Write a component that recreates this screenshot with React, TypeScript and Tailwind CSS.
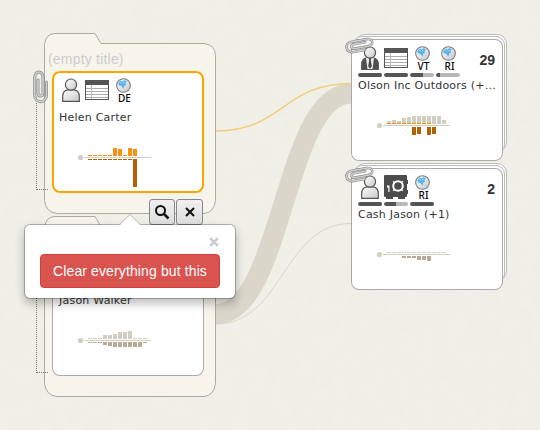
import React from "react";

type Chart = { up: number[]; down: number[]; hot?: number; accent?: boolean; accentDown?: boolean };

const columns = (values: number[], up: boolean, fill: string) =>
  values.map((h, i) =>
    h ? <rect key={i} x={8 + i * 5} y={up ? 10 - h : 13} width={4} height={h} fill={fill} /> : null
  );

function Timeline({ up, down, hot = 0, accent, accentDown }: Chart) {
  return (
    <svg className="ml-[28px] block h-[44px] w-[72px] overflow-visible" viewBox="0 0 72 44" shapeRendering="crispEdges">
      <circle cx="0.5" cy="11.5" r="2.6" fill="#d2cec2" shapeRendering="auto" />
      <rect x="4" y="11" width="67" height="1" fill="#d2cec2" />
      {columns(up, true, accent ? "#f9900f" : "#d2cec2")}
      {Array.from({ length: hot }, (_, i) => (
        <rect key={i} x={8 + i * 5} y={9} width={4} height={1} fill="#f9900f" />
      ))}
      {columns(down, false, accentDown ? "#b26200" : "#b5ab96")}
    </svg>
  );
}

function Person({ tie }: { tie?: boolean }) {
  return (
    <svg className="block h-[24px] w-[24px]" viewBox="0 0 24 24">
      <path
        d="M3.7 23.3V18.5C3.7 14.5 5.7 12.2 9 11.8H15C18.3 12.2 20.3 14.5 20.3 18.5V23.3Z"
        fill={tie ? "#4f4f4f" : "url(#steel)"}
        stroke="#555"
        strokeWidth="1.2"
      />
      {tie && <path d="M8 12L9.500 23H14.500L16 12Z" fill="#eee" />}
      {tie && <path d="M10.6 12h2.8l-.6 2.200 1 6-1.800 2.500-1.800-2.500 1-6Z" fill="#444" />}
      <circle cx="12" cy="6.6" r="5.6" fill="url(#steel)" stroke="#555" strokeWidth="1.2" />
    </svg>
  );
}

function Table() {
  return (
    <svg className="block h-[24px] w-[24px]" viewBox="0 0 24 24" shapeRendering="crispEdges">
      <rect x="0.5" y="2.5" width="23" height="19" fill="#fff" stroke="#555" />
      <rect x="0" y="2" width="24" height="5" fill="#555" />
      <path d="M1 10.5H23M1 13.5H23M1 16.5H23M1 19.5H23" stroke="#aaa" />
      <path d="M6.5 7V21" stroke="#bbb" />
    </svg>
  );
}

function Safe() {
  return (
    <svg className="block h-[24px] w-[24px]" viewBox="0 0 24 24">
      <path d="M1 0H22Q23 0 23 1V5H24V9H23V15H24V19H23V21Q23 22 22 22H21V24H14V22H9V24H2V22H1Q0 22 0 21V1Q0 0 1 0Z" fill="#4c4c4c" />
      <path d="M9.200 6.200L18.800 15.800M18.800 6.200L9.200 15.800" stroke="#fff" strokeWidth="1.400" />
      <circle cx="14" cy="11" r="4.800" fill="#4c4c4c" stroke="#fff" strokeWidth="2" />
      <path d="M3 10.5h2.500V17H4.300v-4.500H3Z" fill="#fff" />
    </svg>
  );
}

function Globe({ code }: { code: string }) {
  return (
    <div className="flex h-[24px] w-[24px] flex-col items-center">
      <svg className="block h-[15px] w-[15px] shrink-0" viewBox="0 0 16 16">
        <circle cx="8" cy="8" r="7.3" fill="url(#steel)" stroke="#777" strokeWidth="1.1" />
        <path d="M2.4 5.2L5 2.7 7.3 3.6 8.8 2.2 11.7 3.5 10.2 5.3 10.6 7.4 9 8 7.8 11.5 5.8 8.6 3 7.8Z" fill="#57b3ee" />
        <path d="M11 9l2.2 1-1 2.5-1.6-1Z" fill="#c7d5dc" />
        <path d="M4.5 4.5l1.6.6M7.5 5.4l1.6-1.1" stroke="#cbe8fa" strokeWidth=".8" />
      </svg>
      <span className="ml-[3px] mt-[-1px] font-['Noto_Sans',sans-serif] text-[10px] leading-[12px] font-medium text-black">{code}</span>
    </div>
  );
}

type Item = { icon: React.ReactNode; level?: number };
type CardData = { name: string; items: Item[]; count?: number; chart: Chart };

function CardBody({ name, items, count, chart }: CardData) {
  return (
    <div className="flex h-full w-full flex-col">
      <div className="flex h-[39px] gap-[2px] pl-[7px] pr-[8px] pt-[7px]">
        {items.map((item, i) => (
          <div key={i} className="flex w-[24px] flex-col gap-[3px]">
            {item.icon}
            {item.level !== undefined && (
              <div className="h-[4px] w-full overflow-hidden rounded-full bg-[#b8b8b8]">
                <div className="h-full rounded-l-full bg-[#555]" style={{ width: `${item.level}%` }} />
              </div>
            )}
          </div>
        ))}
        {count !== undefined && (
          <span className="ml-auto mt-[5px] font-['Liberation_Sans',sans-serif] text-[14px] leading-[18px] font-bold text-[#333]">
            {count}
          </span>
        )}
      </div>
      <div className="h-[36px] whitespace-nowrap pl-[7px] font-['DejaVu_Sans',sans-serif] text-[11px] leading-[16px] tracking-[0.22px] text-[#333]">
        {name}
      </div>
      <Timeline {...chart} />
    </div>
  );
}

function Clip({ className }: { className: string }) {
  const wire = "M5 10V23C5 27 10 27 10 23V8C10 0 1.7 0 1.7 8V25C1.7 34 13.5 34 13.5 25V12";
  return (
    <svg className={className} viewBox="0 0 16 34" fill="none" strokeLinecap="round">
      <path d={wire} stroke="#8c8c8c" strokeWidth="3" />
      <path d={wire} stroke="#d0d0cc" strokeWidth="1.6" />
    </svg>
  );
}

function Folder({ height, title, selected, card }: { height: number; title: string; selected?: boolean; card: CardData }) {
  const b = height - 0.5;
  return (
    <section className="relative w-[172px]" style={{ height }}>
      <svg className="absolute inset-0 h-full w-full overflow-visible">
        <path
          d={`M.5 11.5Q2 .5 11 .5H51L57 10.5H160Q171.5 12 171.5 22.5V${b - 13}Q170 ${b - 1} 160 ${b}H13Q2 ${b - 1} .5 ${b - 13}Z`}
          fill="#f7f4ec"
          stroke="#aaa9a3"
        />
      </svg>
      <div className="relative flex flex-col pl-[8px]">
        <h2 className="-ml-[4px] h-[38px] pt-[17px] font-['Liberation_Sans',sans-serif] text-[14px] leading-[18px] tracking-[0.2px] text-[#ccc]">{title}</h2>
        <div
          className={
            selected
              ? "h-[122px] w-[152px] rounded-[8px] bg-white shadow-[inset_0_0_0_2px_#ffa500]"
              : "h-[122px] w-[152px] rounded-[8px] bg-white shadow-[inset_0_0_0_1px_#aaa]"
          }
        >
          <CardBody {...card} />
        </div>
      </div>
      <div className="absolute left-[-8px] top-[70px] h-[87px] w-[12px] border-b border-l border-dotted border-[#777]" />
      <Clip className="absolute left-[-11px] top-[37px] h-[34px] w-[16px]" />
    </section>
  );
}

function Stack({ card }: { card: CardData }) {
  return (
    <section className="relative h-[122px] w-[152px]">
      <div className="absolute left-[4px] top-[-5px] h-[118px] w-full rounded-[10px] border border-[#bbb] bg-white" />
      <div className="absolute left-[2px] top-[-3px] h-[118px] w-full rounded-[9px] border border-[#bbb] bg-white" />
      <div className="relative h-full rounded-[8px] bg-white shadow-[inset_0_0_0_1px_#aaa]">
        <CardBody {...card} />
      </div>
      <Clip className="absolute left-[1px] top-[-8px] h-[30px] w-[15px] rotate-[80deg]" />
    </section>
  );
}

export default function App() {
  return (
    <main className="relative flex h-[430px] w-[540px] overflow-hidden bg-[#f0f0e8] pl-[44px] pt-[33px]">
      <svg className="absolute inset-0 h-[430px] w-[540px]" fill="none">
        <defs>
          <linearGradient id="steel" x1="0" y1="0" x2="1" y2="1">
            <stop offset="0" stopColor="#fff" />
            <stop offset="1" stopColor="#c8c8c8" />
          </linearGradient>
          <filter id="paper" x="0" y="0" width="100%" height="100%">
            <feTurbulence type="fractalNoise" baseFrequency=".06" numOctaves="4" seed="8" />
            <feColorMatrix values="0 0 0 0 .75  0 0 0 0 .74  0 0 0 0 .68  0 .18 0 0 -.06" />
          </filter>
        </defs>
        <rect width="540" height="430" filter="url(#paper)" />
        <path d="M216 314C283.500 314 283.500 93.500 351 93.500" stroke="#dad6ca" strokeWidth="20" />
        <path d="M216 131C283 131 283 83.500 351 83.500" stroke="#f5cc78" strokeWidth="1.300" />
        <path d="M216 324C283 324 283 223.500 351 223.500" stroke="#dad6ca" />
      </svg>

      <div className="relative flex w-[172px] flex-col gap-[2px]">
        <Folder
          height={181}
          title="(empty title)"
          selected
          card={{
            name: "Helen Carter",
            items: [{ icon: <Person /> }, { icon: <Table /> }, { icon: <Globe code="DE" /> }],
            chart: { up: [1, 1, 1, 1, 1, 8, 7, 1, 8, 7], down: [1, 1, 1, 1, 1, 1, 1, 1, 1, 28], accent: true, accentDown: true },
          }}
        />
        <Folder
          height={181}
          title=""
          card={{
            name: "Jason Walker",
            items: [],
            chart: { up: [1, 1, 1, 4, 4, 5, 7, 7, 8, 1, 1, 1], down: [1, 1, 1, 3, 4, 5, 5, 5, 5, 5, 5, 1] },
          }}
        />
      </div>

      <div className="relative ml-[135px] flex w-[152px] flex-col gap-[7px] pt-[6px]">
        <Stack
          card={{
            name: "Olson Inc Outdoors (+…",
            count: 29,
            items: [
              { icon: <Person tie />, level: 100 },
              { icon: <Table />, level: 100 },
              { icon: <Globe code="VT" />, level: 54 },
              { icon: <Globe code="RI" />, level: 16 },
            ],
            chart: { up: [3, 4, 3, 6, 7, 8, 8, 8, 8, 8, 8, 4], down: [0, 0, 0, 0, 0, 8, 7, 0, 8, 7], hot: 9, accentDown: true },
          }}
        />
        <Stack
          card={{
            name: "Cash Jason (+1)",
            count: 2,
            items: [
              { icon: <Person />, level: 100 },
              { icon: <Safe />, level: 50 },
              { icon: <Globe code="RI" />, level: 100 },
            ],
            chart: { up: Array(12).fill(1), down: [0, 0, 0, 2, 2, 2, 4, 4, 5] },
          }}
        />
      </div>

      <div className="absolute left-[149px] top-[199px] flex gap-[1px]">
        <button className="flex h-[26px] w-[26px] items-center justify-center rounded-[3px] border border-[#888] bg-linear-to-b from-[#f0f0f0] to-[#dedede]">
          <svg className="h-[16px] w-[16px]" viewBox="0 0 16 16" fill="none" stroke="#111">
            <circle cx="6.500" cy="6.500" r="4.500" strokeWidth="2" />
            <path d="M10 10L14.500 14.500" strokeWidth="2.500" />
          </svg>
        </button>
        <button className="flex h-[26px] w-[27px] items-center justify-center rounded-[3px] border border-[#888] bg-linear-to-b from-[#f0f0f0] to-[#dedede]">
          <svg className="h-[10px] w-[10px]" viewBox="0 0 10 10" stroke="#111" strokeWidth="2">
            <path d="M1 1L9 9M9 1L1 9" />
          </svg>
        </button>
      </div>

      <div className="absolute left-[24px] top-[224px] h-[75px] w-[212px] rounded-[6px] border border-black/25 bg-white bg-clip-padding px-[15px] shadow-[0_5px_10px_rgba(0,0,0,0.25)]">
        <svg className="absolute left-[94px] top-[-11px] h-[12px] w-[22px]" viewBox="0 0 22 12">
          <path d="M0 12L11 1L22 12Z" fill="#fff" />
          <path d="M0 11L11 .5L22 11" fill="none" stroke="#bdbcb8" />
        </svg>
        <div className="flex h-[29px] justify-end pr-[1px] pt-[12px]">
          <svg className="h-[10px] w-[10px]" viewBox="0 0 9 9" stroke="#ccc" strokeWidth="2.500">
            <path d="M1 1L8 8M8 1L1 8" />
          </svg>
        </div>
        <button className="h-[34px] w-full whitespace-nowrap rounded-[4px] border border-[#d43f3a] bg-[#d9534f] font-['Liberation_Sans',sans-serif] text-[14px] leading-[20px] tracking-[0.12px] text-white">
          Clear everything but this
        </button>
      </div>
    </main>
  );
}
